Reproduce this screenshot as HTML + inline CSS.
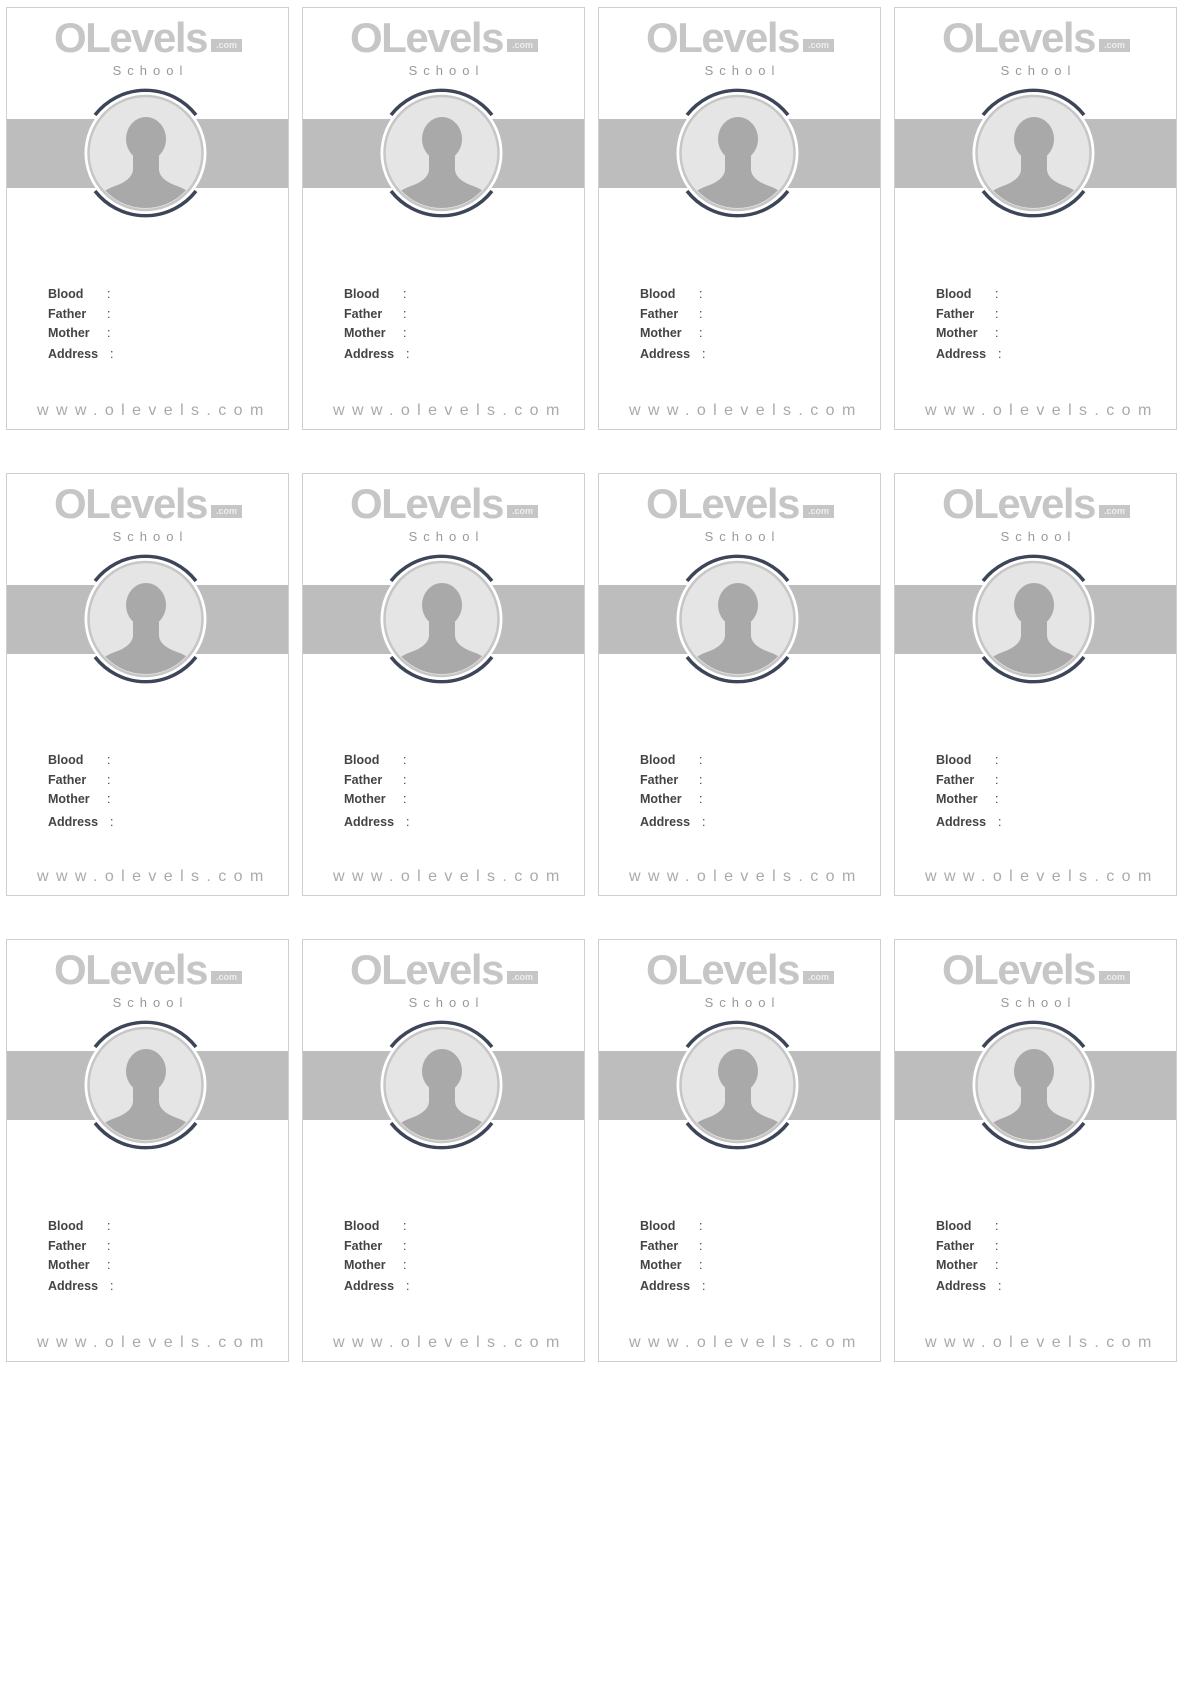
<!DOCTYPE html>
<html><head><meta charset="utf-8"><style>
body{margin:0;width:1191px;height:1684px;background:#fff;position:relative;font-family:"Liberation Sans",sans-serif;overflow:hidden}
.c{position:absolute;width:281px;height:421px;border:1px solid #cfcfcf;background:#fff;overflow:hidden}
.band{position:absolute;left:0;right:0;top:111px;height:69px;background:#bdbdbd}
.logo{position:absolute;left:47px;top:9px;font-size:42px;font-weight:bold;color:#c6c6c6;letter-spacing:-1.5px;line-height:42px}
.com{position:absolute;left:204px;top:31px;width:31px;height:13px;background:#c6c6c6;color:#eee;font-size:9px;line-height:13px;text-align:center;font-weight:bold}
.sch{position:absolute;left:0;width:281px;top:55px;text-align:center;font-size:13px;color:#999;letter-spacing:6px;padding-left:6px;box-sizing:border-box}
svg{position:absolute;left:0;top:0}
.f{position:absolute;left:41px;font-size:12.5px;font-weight:bold;color:#444;line-height:14px}
.f b{position:absolute;left:59px;font-weight:normal}
.w{position:absolute;left:30px;top:394px;font-size:16px;color:#aaa;letter-spacing:7.4px;white-space:nowrap}
</style></head><body>

<!-- template repeated -->
<div class="c" style="left:6px;top:7px"><div class="band"></div><div class="logo">OLevels</div><div class="com">.com</div><div class="sch">School</div><svg width="281" height="300"><defs><clipPath id="k"><circle cx="138.5" cy="145" r="55"/></clipPath></defs><path d="M88 107 A64 64 0 0 1 189 107" fill="none" stroke="#3d4558" stroke-width="3.5"/><path d="M88 183 A64 64 0 0 0 189 183" fill="none" stroke="#3d4558" stroke-width="3.5"/><circle cx="138.5" cy="145" r="61" fill="#fff"/><circle cx="138.5" cy="145" r="57" fill="#e5e5e5" stroke="#c6c6c6" stroke-width="2.5"/><g clip-path="url(#k)" fill="#a9a9a9"><ellipse cx="139" cy="131" rx="20" ry="22"/><path d="M126 148 L126 162 Q125 172 108 178 Q90 184 86 200 L192 200 Q188 184 170 178 Q153 172 152 162 L152 148 Z"/></g></svg><div class="f" style="top:279px">Blood<b>:</b></div><div class="f" style="top:299px">Father<b>:</b></div><div class="f" style="top:318px">Mother<b>:</b></div><div class="f" style="top:339px">Address<b style="left:62px">:</b></div><div class="w">www.olevels.com</div></div>

<div class="c" style="left:302px;top:7px"><div class="band"></div><div class="logo">OLevels</div><div class="com">.com</div><div class="sch">School</div><svg width="281" height="300"><path d="M88 107 A64 64 0 0 1 189 107" fill="none" stroke="#3d4558" stroke-width="3.5"/><path d="M88 183 A64 64 0 0 0 189 183" fill="none" stroke="#3d4558" stroke-width="3.5"/><circle cx="138.5" cy="145" r="61" fill="#fff"/><circle cx="138.5" cy="145" r="57" fill="#e5e5e5" stroke="#c6c6c6" stroke-width="2.5"/><g clip-path="url(#k)" fill="#a9a9a9"><ellipse cx="139" cy="131" rx="20" ry="22"/><path d="M126 148 L126 162 Q125 172 108 178 Q90 184 86 200 L192 200 Q188 184 170 178 Q153 172 152 162 L152 148 Z"/></g></svg><div class="f" style="top:279px">Blood<b>:</b></div><div class="f" style="top:299px">Father<b>:</b></div><div class="f" style="top:318px">Mother<b>:</b></div><div class="f" style="top:339px">Address<b style="left:62px">:</b></div><div class="w">www.olevels.com</div></div>

<div class="c" style="left:598px;top:7px"><div class="band"></div><div class="logo">OLevels</div><div class="com">.com</div><div class="sch">School</div><svg width="281" height="300"><path d="M88 107 A64 64 0 0 1 189 107" fill="none" stroke="#3d4558" stroke-width="3.5"/><path d="M88 183 A64 64 0 0 0 189 183" fill="none" stroke="#3d4558" stroke-width="3.5"/><circle cx="138.5" cy="145" r="61" fill="#fff"/><circle cx="138.5" cy="145" r="57" fill="#e5e5e5" stroke="#c6c6c6" stroke-width="2.5"/><g clip-path="url(#k)" fill="#a9a9a9"><ellipse cx="139" cy="131" rx="20" ry="22"/><path d="M126 148 L126 162 Q125 172 108 178 Q90 184 86 200 L192 200 Q188 184 170 178 Q153 172 152 162 L152 148 Z"/></g></svg><div class="f" style="top:279px">Blood<b>:</b></div><div class="f" style="top:299px">Father<b>:</b></div><div class="f" style="top:318px">Mother<b>:</b></div><div class="f" style="top:339px">Address<b style="left:62px">:</b></div><div class="w">www.olevels.com</div></div>

<div class="c" style="left:894px;top:7px"><div class="band"></div><div class="logo">OLevels</div><div class="com">.com</div><div class="sch">School</div><svg width="281" height="300"><path d="M88 107 A64 64 0 0 1 189 107" fill="none" stroke="#3d4558" stroke-width="3.5"/><path d="M88 183 A64 64 0 0 0 189 183" fill="none" stroke="#3d4558" stroke-width="3.5"/><circle cx="138.5" cy="145" r="61" fill="#fff"/><circle cx="138.5" cy="145" r="57" fill="#e5e5e5" stroke="#c6c6c6" stroke-width="2.5"/><g clip-path="url(#k)" fill="#a9a9a9"><ellipse cx="139" cy="131" rx="20" ry="22"/><path d="M126 148 L126 162 Q125 172 108 178 Q90 184 86 200 L192 200 Q188 184 170 178 Q153 172 152 162 L152 148 Z"/></g></svg><div class="f" style="top:279px">Blood<b>:</b></div><div class="f" style="top:299px">Father<b>:</b></div><div class="f" style="top:318px">Mother<b>:</b></div><div class="f" style="top:339px">Address<b style="left:62px">:</b></div><div class="w">www.olevels.com</div></div>

<div class="c" style="left:6px;top:473px"><div class="band"></div><div class="logo">OLevels</div><div class="com">.com</div><div class="sch">School</div><svg width="281" height="300"><path d="M88 107 A64 64 0 0 1 189 107" fill="none" stroke="#3d4558" stroke-width="3.5"/><path d="M88 183 A64 64 0 0 0 189 183" fill="none" stroke="#3d4558" stroke-width="3.5"/><circle cx="138.5" cy="145" r="61" fill="#fff"/><circle cx="138.5" cy="145" r="57" fill="#e5e5e5" stroke="#c6c6c6" stroke-width="2.5"/><g clip-path="url(#k)" fill="#a9a9a9"><ellipse cx="139" cy="131" rx="20" ry="22"/><path d="M126 148 L126 162 Q125 172 108 178 Q90 184 86 200 L192 200 Q188 184 170 178 Q153 172 152 162 L152 148 Z"/></g></svg><div class="f" style="top:279px">Blood<b>:</b></div><div class="f" style="top:299px">Father<b>:</b></div><div class="f" style="top:318px">Mother<b>:</b></div><div class="f" style="top:341px">Address<b style="left:62px">:</b></div><div class="w">www.olevels.com</div></div>

<div class="c" style="left:302px;top:473px"><div class="band"></div><div class="logo">OLevels</div><div class="com">.com</div><div class="sch">School</div><svg width="281" height="300"><path d="M88 107 A64 64 0 0 1 189 107" fill="none" stroke="#3d4558" stroke-width="3.5"/><path d="M88 183 A64 64 0 0 0 189 183" fill="none" stroke="#3d4558" stroke-width="3.5"/><circle cx="138.5" cy="145" r="61" fill="#fff"/><circle cx="138.5" cy="145" r="57" fill="#e5e5e5" stroke="#c6c6c6" stroke-width="2.5"/><g clip-path="url(#k)" fill="#a9a9a9"><ellipse cx="139" cy="131" rx="20" ry="22"/><path d="M126 148 L126 162 Q125 172 108 178 Q90 184 86 200 L192 200 Q188 184 170 178 Q153 172 152 162 L152 148 Z"/></g></svg><div class="f" style="top:279px">Blood<b>:</b></div><div class="f" style="top:299px">Father<b>:</b></div><div class="f" style="top:318px">Mother<b>:</b></div><div class="f" style="top:341px">Address<b style="left:62px">:</b></div><div class="w">www.olevels.com</div></div>

<div class="c" style="left:598px;top:473px"><div class="band"></div><div class="logo">OLevels</div><div class="com">.com</div><div class="sch">School</div><svg width="281" height="300"><path d="M88 107 A64 64 0 0 1 189 107" fill="none" stroke="#3d4558" stroke-width="3.5"/><path d="M88 183 A64 64 0 0 0 189 183" fill="none" stroke="#3d4558" stroke-width="3.5"/><circle cx="138.5" cy="145" r="61" fill="#fff"/><circle cx="138.5" cy="145" r="57" fill="#e5e5e5" stroke="#c6c6c6" stroke-width="2.5"/><g clip-path="url(#k)" fill="#a9a9a9"><ellipse cx="139" cy="131" rx="20" ry="22"/><path d="M126 148 L126 162 Q125 172 108 178 Q90 184 86 200 L192 200 Q188 184 170 178 Q153 172 152 162 L152 148 Z"/></g></svg><div class="f" style="top:279px">Blood<b>:</b></div><div class="f" style="top:299px">Father<b>:</b></div><div class="f" style="top:318px">Mother<b>:</b></div><div class="f" style="top:341px">Address<b style="left:62px">:</b></div><div class="w">www.olevels.com</div></div>

<div class="c" style="left:894px;top:473px"><div class="band"></div><div class="logo">OLevels</div><div class="com">.com</div><div class="sch">School</div><svg width="281" height="300"><path d="M88 107 A64 64 0 0 1 189 107" fill="none" stroke="#3d4558" stroke-width="3.5"/><path d="M88 183 A64 64 0 0 0 189 183" fill="none" stroke="#3d4558" stroke-width="3.5"/><circle cx="138.5" cy="145" r="61" fill="#fff"/><circle cx="138.5" cy="145" r="57" fill="#e5e5e5" stroke="#c6c6c6" stroke-width="2.5"/><g clip-path="url(#k)" fill="#a9a9a9"><ellipse cx="139" cy="131" rx="20" ry="22"/><path d="M126 148 L126 162 Q125 172 108 178 Q90 184 86 200 L192 200 Q188 184 170 178 Q153 172 152 162 L152 148 Z"/></g></svg><div class="f" style="top:279px">Blood<b>:</b></div><div class="f" style="top:299px">Father<b>:</b></div><div class="f" style="top:318px">Mother<b>:</b></div><div class="f" style="top:341px">Address<b style="left:62px">:</b></div><div class="w">www.olevels.com</div></div>

<div class="c" style="left:6px;top:939px"><div class="band"></div><div class="logo">OLevels</div><div class="com">.com</div><div class="sch">School</div><svg width="281" height="300"><path d="M88 107 A64 64 0 0 1 189 107" fill="none" stroke="#3d4558" stroke-width="3.5"/><path d="M88 183 A64 64 0 0 0 189 183" fill="none" stroke="#3d4558" stroke-width="3.5"/><circle cx="138.5" cy="145" r="61" fill="#fff"/><circle cx="138.5" cy="145" r="57" fill="#e5e5e5" stroke="#c6c6c6" stroke-width="2.5"/><g clip-path="url(#k)" fill="#a9a9a9"><ellipse cx="139" cy="131" rx="20" ry="22"/><path d="M126 148 L126 162 Q125 172 108 178 Q90 184 86 200 L192 200 Q188 184 170 178 Q153 172 152 162 L152 148 Z"/></g></svg><div class="f" style="top:279px">Blood<b>:</b></div><div class="f" style="top:299px">Father<b>:</b></div><div class="f" style="top:318px">Mother<b>:</b></div><div class="f" style="top:339px">Address<b style="left:62px">:</b></div><div class="w">www.olevels.com</div></div>

<div class="c" style="left:302px;top:939px"><div class="band"></div><div class="logo">OLevels</div><div class="com">.com</div><div class="sch">School</div><svg width="281" height="300"><path d="M88 107 A64 64 0 0 1 189 107" fill="none" stroke="#3d4558" stroke-width="3.5"/><path d="M88 183 A64 64 0 0 0 189 183" fill="none" stroke="#3d4558" stroke-width="3.5"/><circle cx="138.5" cy="145" r="61" fill="#fff"/><circle cx="138.5" cy="145" r="57" fill="#e5e5e5" stroke="#c6c6c6" stroke-width="2.5"/><g clip-path="url(#k)" fill="#a9a9a9"><ellipse cx="139" cy="131" rx="20" ry="22"/><path d="M126 148 L126 162 Q125 172 108 178 Q90 184 86 200 L192 200 Q188 184 170 178 Q153 172 152 162 L152 148 Z"/></g></svg><div class="f" style="top:279px">Blood<b>:</b></div><div class="f" style="top:299px">Father<b>:</b></div><div class="f" style="top:318px">Mother<b>:</b></div><div class="f" style="top:339px">Address<b style="left:62px">:</b></div><div class="w">www.olevels.com</div></div>

<div class="c" style="left:598px;top:939px"><div class="band"></div><div class="logo">OLevels</div><div class="com">.com</div><div class="sch">School</div><svg width="281" height="300"><path d="M88 107 A64 64 0 0 1 189 107" fill="none" stroke="#3d4558" stroke-width="3.5"/><path d="M88 183 A64 64 0 0 0 189 183" fill="none" stroke="#3d4558" stroke-width="3.5"/><circle cx="138.5" cy="145" r="61" fill="#fff"/><circle cx="138.5" cy="145" r="57" fill="#e5e5e5" stroke="#c6c6c6" stroke-width="2.5"/><g clip-path="url(#k)" fill="#a9a9a9"><ellipse cx="139" cy="131" rx="20" ry="22"/><path d="M126 148 L126 162 Q125 172 108 178 Q90 184 86 200 L192 200 Q188 184 170 178 Q153 172 152 162 L152 148 Z"/></g></svg><div class="f" style="top:279px">Blood<b>:</b></div><div class="f" style="top:299px">Father<b>:</b></div><div class="f" style="top:318px">Mother<b>:</b></div><div class="f" style="top:339px">Address<b style="left:62px">:</b></div><div class="w">www.olevels.com</div></div>

<div class="c" style="left:894px;top:939px"><div class="band"></div><div class="logo">OLevels</div><div class="com">.com</div><div class="sch">School</div><svg width="281" height="300"><path d="M88 107 A64 64 0 0 1 189 107" fill="none" stroke="#3d4558" stroke-width="3.5"/><path d="M88 183 A64 64 0 0 0 189 183" fill="none" stroke="#3d4558" stroke-width="3.5"/><circle cx="138.5" cy="145" r="61" fill="#fff"/><circle cx="138.5" cy="145" r="57" fill="#e5e5e5" stroke="#c6c6c6" stroke-width="2.5"/><g clip-path="url(#k)" fill="#a9a9a9"><ellipse cx="139" cy="131" rx="20" ry="22"/><path d="M126 148 L126 162 Q125 172 108 178 Q90 184 86 200 L192 200 Q188 184 170 178 Q153 172 152 162 L152 148 Z"/></g></svg><div class="f" style="top:279px">Blood<b>:</b></div><div class="f" style="top:299px">Father<b>:</b></div><div class="f" style="top:318px">Mother<b>:</b></div><div class="f" style="top:339px">Address<b style="left:62px">:</b></div><div class="w">www.olevels.com</div></div>

</body></html>
